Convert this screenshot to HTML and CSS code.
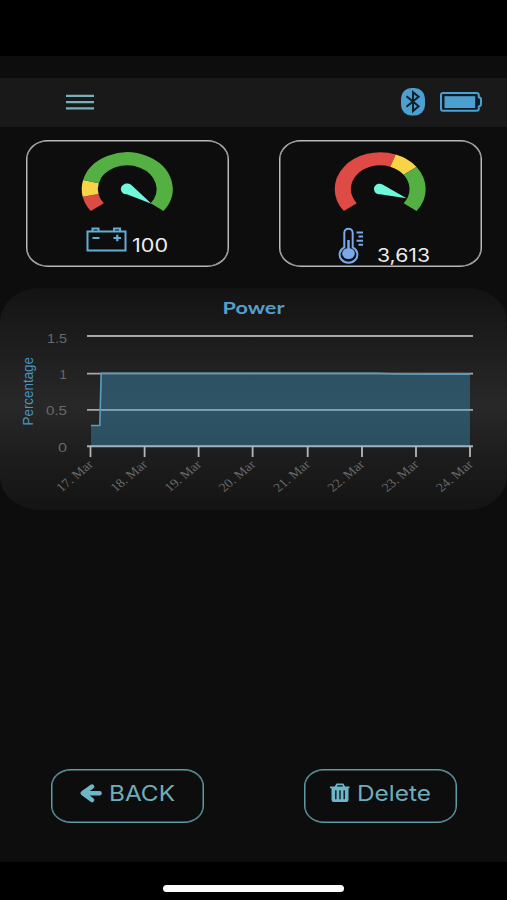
FILE: index.html
```html
<!DOCTYPE html>
<html lang="en">
<head>
<meta charset="utf-8">
<title>Power</title>
<link rel="stylesheet" href="styles.css">
</head>
<body>
<div class="screen">
  <header class="bar">
    <svg class="menu" width="28" height="18" viewBox="0 0 28 18"><path d="M0 2.9H28M0 9.1H28M0 15.400H28"/></svg>
    <div class="status">
      <svg width="24" height="28" viewBox="0 0 24 28"><rect width="24" height="27.5" rx="10.5" ry="10.5" fill="#4d9fd0"/><path class="rune" d="M5.5 8.2L17.6 18.3L12 23V4.2L17.6 8.8L5.5 18.8"/></svg>
      <svg width="42" height="20" viewBox="0 0 42 20"><path class="case" d="M3 1H36.5Q38.8 1 38.8 3V5.2Q41 5.5 41 7.5V12Q41 14.2 38.8 14.5V16.8Q38.8 18.8 36.5 18.8H3Q1 18.8 1 16.8V3Q1 1 3 1Z"/><rect x="4.5" y="4.2" width="30.7" height="11.8" fill="#4d9fd0"/></svg>
    </div>
  </header>

  <section class="cards">
    <div class="card">
      <svg width="201" height="125" viewBox="0 0 201 125">
        <g class="gauge" transform="translate(100.2 48) scale(.455 .367)">
          <path stroke="#de4b45" d="M-65.69 49.5A82.25 82.25 0 0 1-80.45 17.1"/>
          <path stroke="#f8d347" d="M-80.45 17.1A82.25 82.25 0 0 1-79.7-20.32"/>
          <path stroke="#55b043" d="M-79.7-20.32A82.25 82.25 0 1 1 65.69 49.5"/>
        </g>
        <path class="needle" d="M124.500 62.800L103.800 43.600C100 40.800 93.600 43.400 93.900 48.400C94.200 51.500 97 53.300 99.800 53.300Z"/>
        <g class="battery">
          <rect x="60.500" y="90.500" width="38" height="19"/>
          <path d="M65.500 90V87.500H71.500V90M87 90V87.500H93V90"/>
          <path class="poles" d="M65.500 97H72.500M86.500 97H94M90.300 93.800V100.200"/>
        </g>
        <text class="value" x="105" y="111" textLength="36" lengthAdjust="spacingAndGlyphs">100</text>
      </svg>
    </div>
    <div class="card">
      <svg width="201" height="125" viewBox="0 0 201 125">
        <g class="gauge" transform="translate(100.2 48) scale(.455 .367)">
          <path stroke="#de4b45" d="M-65.69 49.5A82.25 82.25 0 0 1 28.13-77.29"/>
          <path stroke="#f8d347" d="M28.13-77.29A82.25 82.25 0 0 1 65.69-49.5"/>
          <path stroke="#55b043" d="M65.69-49.5A82.25 82.25 0 0 1 65.69 49.5"/>
        </g>
        <path class="needle" d="M126.500 57.200L102.500 43.400C98.500 41.600 94 44 94 47.800C94 51.500 96.500 53.300 100 53.300Z"/>
        <g class="thermo">
          <path d="M64.300 106.300V92C64.300 86.300 72.700 86.300 72.700 92V106.300A8.900 8.200 0 1 1 64.300 106.300Z"/>
          <ellipse cx="68.500" cy="112.500" rx="6.300" ry="5.600" fill="#79a9ea" stroke="none"/>
          <path class="mercury" d="M68.500 112V99"/>
          <path d="M76.500 91.500H83M78.500 95.500H83M76.500 99.700H83M78.500 103.700H83"/>
        </g>
        <text class="value" x="97" y="121" textLength="53" lengthAdjust="spacingAndGlyphs">3,613</text>
      </svg>
    </div>
  </section>

  <section class="panel">
    <svg width="507" height="222" viewBox="0 288 507 222">
      <text class="title" x="222.500" y="314" textLength="62" lengthAdjust="spacingAndGlyphs">Power</text>
      <path class="grid" d="M87 336H473M87 373.700H473M87 409.800H473"/>
      <path class="area" d="M91 446V425.500H100L101 373H470V446Z"/>
      <path class="overlay" d="M101 409.800H470"/>
      <path class="axis" d="M87 446.200H473"/>
      <path class="ticks" d="M90.500 446V457M144.600 446V457M198.600 446V457M252.600 446V457M307.700 446V457M362 446V457M416 446V457M470 446V457"/>
      <path class="line" d="M91 425.500H99.800L101.200 373.200H376L400 374L470 374.300"/>
      <g class="ylabels">
        <text x="47" y="342.500" textLength="20" lengthAdjust="spacingAndGlyphs">1.5</text>
        <text x="59.500" y="378.500">1</text>
        <text x="46" y="415.300" textLength="21" lengthAdjust="spacingAndGlyphs">0.5</text>
        <text x="58" y="451.600" textLength="9" lengthAdjust="spacingAndGlyphs">0</text>
      </g>
      <text class="unit" transform="translate(33 425.500) rotate(-90)" textLength="68.500" lengthAdjust="spacingAndGlyphs">Percentage</text>
      <g class="xlabels">
        <text transform="translate(94 465.500) scale(1.120 1) rotate(-43)">17. Mar</text>
        <text transform="translate(148.100 465.500) scale(1.120 1) rotate(-43)">18. Mar</text>
        <text transform="translate(202.200 465.500) scale(1.120 1) rotate(-43)">19. Mar</text>
        <text transform="translate(256.300 465.500) scale(1.120 1) rotate(-43)">20. Mar</text>
        <text transform="translate(311 465.500) scale(1.120 1) rotate(-43)">21. Mar</text>
        <text transform="translate(365.200 465.500) scale(1.120 1) rotate(-43)">22. Mar</text>
        <text transform="translate(419.400 465.500) scale(1.120 1) rotate(-43)">23. Mar</text>
        <text transform="translate(473.600 465.500) scale(1.120 1) rotate(-43)">24. Mar</text>
      </g>
    </svg>
  </section>

  <nav class="actions">
    <button class="btn">
      <svg width="151" height="52" viewBox="0 0 151 52">
        <path class="arrow" d="M47.500 23.200H31M40 16.600L30.800 23.200L40 30"/>
        <text x="57" y="31" textLength="66" lengthAdjust="spacingAndGlyphs">BACK</text>
      </svg>
    </button>
    <button class="btn">
      <svg width="151" height="52" viewBox="0 0 151 52">
        <path class="lid" d="M25 17.300H44.500M30.500 17L32 14.300H37.800L39.300 17"/>
        <path fill="#70b6c9" d="M26.500 18H43.500V29.500Q43.500 32 41 32H29Q26.500 32 26.500 29.500Z"/>
        <path class="slots" d="M30.800 20.300V29.300M35 20.300V29.300M39.200 20.300V29.300"/>
        <text x="52" y="31" textLength="74" lengthAdjust="spacingAndGlyphs">Delete</text>
      </svg>
    </button>
  </nav>
</div>
<footer class="home"><span></span></footer>
</body>
</html>
```
FILE: styles.css
```css
* { box-sizing: border-box; }
body {
  margin: 0;
  height: 900px;
  padding-top: 56px;
  display: flex;
  flex-direction: column;
  background: #000;
  font-family: "Liberation Sans", Arial, sans-serif;
  overflow: hidden;
}
svg { display: block; }
.screen {
  height: 806px;
  padding-top: 22px;
  background: #0d0d0d;
  display: flex;
  flex-direction: column;
}
.bar {
  height: 49px;
  background: #191919;
  padding: 0 25px 1px 66px;
  display: flex;
  align-items: center;
  justify-content: space-between;
}
.menu { fill: none; stroke: #76b0bc; stroke-width: 2.4; }
.status { display: flex; align-items: center; gap: 15px; }
.rune { fill: none; stroke: #10202b; stroke-width: 2; }
.case { fill: #0b1b27; stroke: #4d9fd0; stroke-width: 2; }

.cards {
  display: flex;
  justify-content: space-between;
  padding: 13px 25px 0 25.5px;
}
.card {
  width: 203px;
  height: 127px;
  border: 1px solid #b9b9b9;
  box-shadow: inset 0 0 0 .5px #b9b9b9;
  border-radius: 22px / 19px;
  overflow: hidden;
}
.gauge { fill: none; stroke-width: 35.5; }
.needle { fill: #70f8dc; }
.battery { fill: none; stroke: #63afd4; stroke-width: 2; }
.battery .poles { stroke-width: 2.2; }
.thermo { fill: none; stroke: #79a9ea; stroke-width: 2; }
.thermo .mercury { stroke-width: 2.5; }
.value { font: 18px Inter, sans-serif; fill: #ededed; }

.panel {
  margin-top: 21px;
  height: 222px;
  border-radius: 40px / 34px;
  background: linear-gradient(#131313, #1d1d1d 25%, #282828 53%, #1d1d1d 75%, #141414);
}
.title { font: bold 17.5px Lato, sans-serif; fill: #559fcb; }
.grid { stroke: #a8a8a8; stroke-width: 1.8; }
.overlay { stroke: #7fa4b4; stroke-width: 1.8; }
.axis { stroke: #a3b3bb; stroke-width: 2; }
.ticks { stroke: #b5b5bd; stroke-width: 1.8; }
.area { fill: #337899; fill-opacity: .55; }
.line { fill: none; stroke: #5c9dbb; stroke-width: 1.6; }
.ylabels { font-size: 13px; fill: #696969; }
.unit { font-size: 15px; fill: #4a95c1; }
.xlabels { font: 12.5px "Liberation Serif", serif; fill: #6a6a6a; text-anchor: end; }

.actions {
  margin-top: 259px;
  padding: 0 50px 0 51px;
  display: flex;
  justify-content: space-between;
}
.btn {
  width: 153px;
  height: 54px;
  padding: 0;
  border: 1px solid #5f9ba5;
  box-shadow: inset 0 0 0 .5px #5f9ba5;
  border-radius: 20px / 17px;
  background: none;
  font: 21.5px Inter, sans-serif;
}
.btn text { fill: #70adbb; }
.arrow { fill: none; stroke: #70b6c9; stroke-width: 4.6; stroke-linecap: round; stroke-linejoin: round; }
.lid { fill: none; stroke: #70b6c9; stroke-width: 1.8; }
.slots { stroke: #102227; stroke-width: 1.5; }

.home { height: 38px; display: flex; justify-content: center; padding-top: 23px; }
.home span { width: 181px; height: 7px; border-radius: 4px; background: #fff; }
```
